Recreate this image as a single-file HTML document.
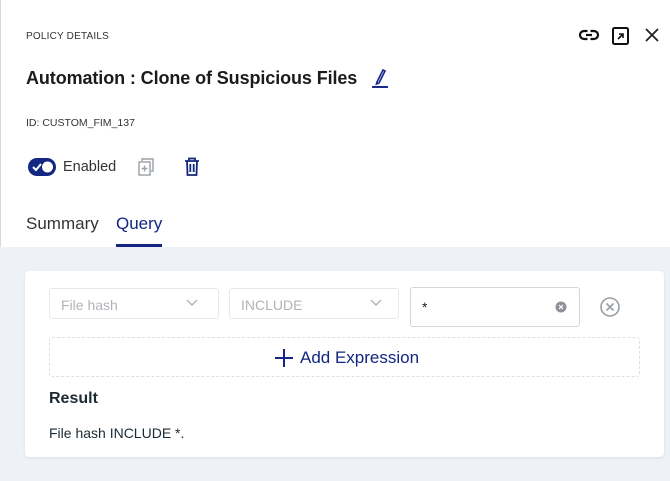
<!DOCTYPE html>
<html><head><style>
*{margin:0;padding:0;box-sizing:border-box}
body{width:670px;height:481px;overflow:hidden;background:#eef2f7;font-family:"Liberation Sans",sans-serif;position:relative}
.top{position:absolute;left:0;top:0;width:670px;height:247px;background:#fff;border-left:1px solid #d8d8d8}
.a{position:absolute}
.card{position:absolute;left:25px;top:271px;width:639px;height:186px;background:#fff;border-radius:4px;box-shadow:0 1px 3px rgba(0,0,0,.08)}
.sel{position:absolute;border:1px solid #e6e8ec;border-radius:3px;color:#b0b4b8;font-size:14px;padding:8px 11px}
</style></head><body>
<div class="top">
<div class="a" style="left:25px;top:31px;font-size:10px;color:#333;letter-spacing:.2px">POLICY DETAILS</div>
<svg class="a" style="left:577px;top:26px" width="22" height="18" viewBox="0 0 22 18"><rect x="2" y="5" width="18" height="8" rx="4" fill="none" stroke="#111" stroke-width="2.2"/><rect x="9.5" y="3" width="3" height="12" fill="#fff"/><line x1="8" y1="9" x2="14" y2="9" stroke="#111" stroke-width="2.2"/></svg>
<svg class="a" style="left:610px;top:26px" width="20" height="20"><rect x="2" y="2" width="15" height="16" rx="1.5" fill="none" stroke="#111" stroke-width="2"/><path d="M7 13 L12 8 M8 8 H12 V12" fill="none" stroke="#111" stroke-width="1.6"/></svg>
<svg class="a" style="left:643px;top:27px" width="16" height="16"><path d="M2 2 L14 14 M14 2 L2 14" stroke="#222" stroke-width="1.8"/></svg>
<div class="a" style="left:25px;top:68px;font-size:18px;font-weight:bold;color:#1b1b1b;letter-spacing:-.1px">Automation : Clone of Suspicious Files</div>
<svg class="a" style="left:369px;top:67px" width="20" height="22"><path d="M7 15 L13 3 L15 4 L9 16 L6.5 17 Z" fill="none" stroke="#1a2b8c" stroke-width="1.7"/><line x1="2" y1="20" x2="18" y2="20" stroke="#1a2b8c" stroke-width="2"/></svg>
<div class="a" style="left:25px;top:117px;font-size:10.5px;color:#333">ID: CUSTOM_FIM_137</div>
<div class="a" style="left:27px;top:158px;width:28px;height:18px;border-radius:9px;background:#122682"></div>
<svg class="a" style="left:27px;top:158px" width="28" height="18"><path d="M5 9 L8 12 L13 6" fill="none" stroke="#fff" stroke-width="2"/><circle cx="19.5" cy="9" r="5.5" fill="#fff"/></svg>
<div class="a" style="left:62px;top:159px;font-size:14.5px;color:#333">Enabled</div>
<svg class="a" style="left:136px;top:157px" width="20" height="20"><path d="M5 4 V2 H16 V14 H14" fill="none" stroke="#9aa0a6" stroke-width="1.4"/><rect x="2" y="5" width="11" height="13" fill="none" stroke="#9aa0a6" stroke-width="1.4"/><path d="M7.5 8.5 V14.5 M4.5 11.5 H10.5" stroke="#9aa0a6" stroke-width="1.4"/></svg>
<svg class="a" style="left:182px;top:156px" width="18" height="22"><path d="M2 5 H16 M6 5 V2.5 H12 V5 M4 5 L4.5 19 H13.5 L14 5 M7.3 8 V16 M10.7 8 V16" fill="none" stroke="#122682" stroke-width="1.8"/></svg>
<div class="a" style="left:25px;top:214px;font-size:17px;color:#333">Summary</div>
<div class="a" style="left:115px;top:214px;font-size:17px;color:#122682">Query</div>
<div class="a" style="left:115px;top:244px;width:46px;height:3px;background:#122682"></div>
</div>
<div class="card"></div>
<div class="sel" style="left:49px;top:288px;width:170px;height:31px">File hash</div>
<svg class="a" style="left:185px;top:298px" width="14" height="10"><path d="M2 2 L7 7 L12 2" fill="none" stroke="#b0b4b8" stroke-width="1.4"/></svg>
<div class="sel" style="left:229px;top:288px;width:170px;height:31px">INCLUDE</div>
<svg class="a" style="left:369px;top:298px" width="14" height="10"><path d="M2 2 L7 7 L12 2" fill="none" stroke="#b0b4b8" stroke-width="1.4"/></svg>
<div class="sel" style="left:410px;top:287px;width:170px;height:40px;border-color:#d4d6da;color:#222;padding-top:11px">*</div>
<svg class="a" style="left:555px;top:301px" width="12" height="12"><circle cx="6" cy="6" r="5.5" fill="#8e9296"/><path d="M4 4 L8 8 M8 4 L4 8" stroke="#fff" stroke-width="1.2"/></svg>
<svg class="a" style="left:599px;top:296px" width="22" height="22"><circle cx="11" cy="11" r="9" fill="none" stroke="#9aa0a6" stroke-width="1.6"/><path d="M7.5 7.5 L14.5 14.5 M14.5 7.5 L7.5 14.5" stroke="#9aa0a6" stroke-width="1.6"/></svg>
<div class="a" style="left:49px;top:337px;width:591px;height:40px;border:1px dashed #dcdfe3;border-radius:3px"></div>
<svg class="a" style="left:274px;top:348px" width="20" height="20"><path d="M10 1 V19 M1 10 H19" stroke="#122682" stroke-width="2"/></svg>
<div class="a" style="left:300px;top:348px;font-size:17px;color:#122682">Add Expression</div>
<div class="a" style="left:49px;top:390px;font-size:16px;color:#1c2a33;font-weight:bold">Result</div>
<div class="a" style="left:49px;top:425px;font-size:14px;color:#1c2a33">File hash INCLUDE *.</div>
</body></html>
